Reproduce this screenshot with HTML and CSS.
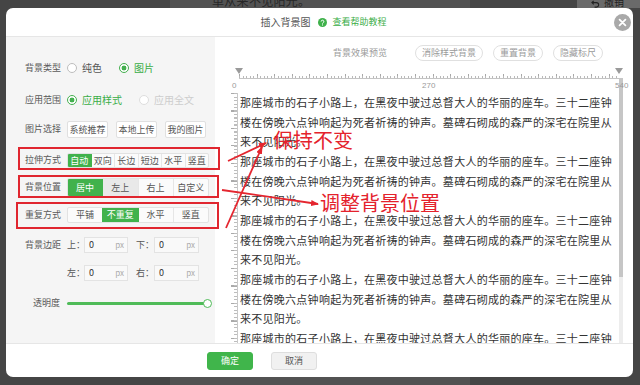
FILE: index.html
```html
<!DOCTYPE html>
<html lang="zh-CN">
<head>
<meta charset="utf-8">
<title>插入背景图</title>
<link rel="stylesheet" href="styles.css">
</head>
<body>
<div class="topbar">
  <span class="ghost-text">单从来不见阳光。</span>
  <span class="undo"><svg class="undo-ico" viewBox="0 0 10 10" width="9" height="9"><path d="M3 2 L1 4 L3 6 M1 4 H6 a2.5 2.5 0 0 1 0 5 H4" fill="none" stroke="#222" stroke-width="1.2"/></svg>撤销</span>
</div>

<div class="dialog">
  <header class="dlg-head">
    <span></span>
    <div class="head-center">
      <span class="dlg-title">插入背景图</span>
      <a class="help"><svg class="help-ico" viewBox="0 0 10 10" width="9" height="9"><circle cx="5" cy="5" r="5" fill="#3fb14b"/><path d="M3.5 3.9 a1.5 1.5 0 1 1 2.1 1.4 c-.5.25-.6.5-.6 1" fill="none" stroke="#fff" stroke-width="1.1"/><circle cx="5" cy="7.7" r=".65" fill="#fff"/></svg>查看帮助教程</a>
    </div>
    <button class="close" aria-label="关闭"><svg viewBox="0 0 17 17" width="17" height="17"><circle cx="8.5" cy="8.5" r="8.5" fill="#a9a9a9"/><path d="M5.6 5.6 L11.4 11.4 M11.4 5.6 L5.6 11.4" stroke="#fff" stroke-width="1.8" stroke-linecap="round"/></svg></button>
  </header>

  <div class="dlg-body">
    <aside class="side">
      <div class="row row-type">
        <span class="lbl">背景类型</span>
        <label class="opt"><span class="radio"></span>纯色</label>
        <label class="opt on"><span class="radio"></span>图片</label>
      </div>
      <div class="row row-scope">
        <span class="lbl">应用范围</span>
        <label class="opt on"><span class="radio"></span>应用样式</label>
        <label class="opt off"><span class="radio"></span>应用全文</label>
      </div>
      <div class="row row-pic">
        <span class="lbl">图片选择</span>
        <div class="pick">
          <button class="btn">系统推荐</button>
          <button class="btn">本地上传</button>
          <button class="btn">我的图片</button>
        </div>
      </div>
      <div class="row row-stretch">
        <span class="lbl">拉伸方式</span>
        <div class="seg seg-sm">
          <span class="on">自动</span><span>双向</span><span>长边</span><span>短边</span><span>水平</span><span>竖直</span>
        </div>
      </div>
      <div class="row row-pos">
        <span class="lbl">背景位置</span>
        <div class="seg seg-lg">
          <span class="on">居中</span><span class="hover">左上</span><span>右上</span><span>自定义</span>
        </div>
      </div>
      <div class="row row-repeat">
        <span class="lbl">重复方式</span>
        <div class="seg seg-md">
          <span>平铺</span><span class="on">不重复</span><span>水平</span><span>竖直</span>
        </div>
      </div>
      <div class="row row-margin">
        <span class="lbl">背景边距</span>
        <span class="side-lbl">上：</span>
        <span class="field"><span>0</span><span class="unit">px</span></span>
        <span class="side-lbl side-lbl-2">下：</span>
        <span class="field"><span>0</span><span class="unit">px</span></span>
      </div>
      <div class="row row-margin2">
        <span class="lbl"></span>
        <span class="side-lbl">左：</span>
        <span class="field"><span>0</span><span class="unit">px</span></span>
        <span class="side-lbl side-lbl-2">右：</span>
        <span class="field"><span>0</span><span class="unit">px</span></span>
      </div>
      <div class="row row-alpha">
        <span class="lbl">透明度</span>
        <div class="slider"><span class="knob"></span></div>
      </div>
    </aside>

    <section class="preview">
      <div class="toolbar">
        <span class="tb-text">背景效果预览</span>
        <button class="tb-btn">消除样式背景</button>
        <button class="tb-btn">重置背景</button>
        <button class="tb-btn">隐藏标尺</button>
      </div>
      <div class="stage">
        <div class="stage-main">
          <div class="hruler">
            <span class="tri-down tri-start"></span>
            <span class="tri-down tri-end"></span>
            <div class="ticks"></div>
            <span class="rl rl-0">0</span>
            <span class="rl rl-270">270</span>
            <span class="rl rl-540">540</span>
          </div>
          <div class="doc">
            <div class="vruler"><span class="tri-right"></span></div>
            <div class="text">
              <p>那座城市的石子小路上，在黑夜中驶过总督大人的华丽的座车。三十二座钟楼在傍晚六点钟响起为死者祈祷的钟声。墓碑石砌成的森严的深宅在院里从来不见阳光。</p>
              <p>那座城市的石子小路上，在黑夜中驶过总督大人的华丽的座车。三十二座钟楼在傍晚六点钟响起为死者祈祷的钟声。墓碑石砌成的森严的深宅在院里从来不见阳光。</p>
              <p>那座城市的石子小路上，在黑夜中驶过总督大人的华丽的座车。三十二座钟楼在傍晚六点钟响起为死者祈祷的钟声。墓碑石砌成的森严的深宅在院里从来不见阳光。</p>
              <p>那座城市的石子小路上，在黑夜中驶过总督大人的华丽的座车。三十二座钟楼在傍晚六点钟响起为死者祈祷的钟声。墓碑石砌成的森严的深宅在院里从来不见阳光。</p>
              <p>那座城市的石子小路上，在黑夜中驶过总督大人的华丽的座车。三十二座钟楼在傍晚六点钟响起为死者祈祷的钟声。墓碑石砌成的森严的深宅在院里从来不见阳光。</p>
            </div>
          </div>
        </div>
        <div class="scroll"></div>
      </div>
    </section>
  </div>

  <footer class="dlg-foot">
    <button class="ok">确定</button>
    <button class="cancel">取消</button>
  </footer>

  <div class="annot">
    <span class="mark mark-1"></span>
    <span class="mark mark-2"></span>
    <span class="mark mark-3"></span>
    <svg class="arrows" viewBox="6 8 627 369" width="627" height="369">
      <defs>
        <marker id="ah" viewBox="0 0 8 6" refX="7" refY="3" markerWidth="8" markerHeight="6" markerUnits="userSpaceOnUse" orient="auto">
          <path d="M0 0 L8 3 L0 6 Z" fill="#e4262f"/>
        </marker>
      </defs>
      <g stroke="#e4262f" stroke-width="1.8" fill="none">
        <line x1="228" y1="161" x2="266" y2="143" marker-end="url(#ah)"/>
        <line x1="222" y1="190" x2="318" y2="204" marker-end="url(#ah)"/>
        <line x1="226" y1="228" x2="262" y2="147" marker-end="url(#ah)"/>
      </g>
    </svg>
    <span class="note note-1">保持不变</span>
    <span class="note note-2">调整背景位置</span>
  </div>
</div>
</body>
</html>
```

FILE: styles.css
```css
* { box-sizing: border-box; }

body {
  margin: 0;
  width: 640px;
  height: 385px;
  overflow: hidden;
  font-family: "Noto Sans CJK SC", "Noto Sans", sans-serif;
  background: linear-gradient(to right, #454545 0 170px, #525252 170px 470px, #454545 470px);
}

button { font-family: inherit; cursor: pointer; }

/* backdrop strip above the dialog */
.topbar {
  height: 8px;
  display: flex;
  align-items: flex-end;
  overflow: hidden;
}
.ghost-text {
  margin-left: 212px;
  font-size: 12px;
  line-height: 14px;
  color: #262626;
  letter-spacing: 0.3px;
}
.undo {
  margin-left: auto;
  width: 63px;
  height: 8px;
  background: #6a6a6a;
  display: flex;
  align-items: flex-end;
  gap: 4px;
  padding-left: 14px;
  font-size: 10px;
  line-height: 12px;
  color: #222;
  overflow: hidden;
}
.undo-ico { flex: none; margin-bottom: 0; }

/* dialog */
.dialog {
  position: relative;
  margin-left: 6px;
  width: 627px;
  height: 369px;
  background: #fff;
  border-radius: 7px;
  overflow: hidden;
  display: flex;
  flex-direction: column;
}

.dlg-head {
  height: 29px;
  flex: none;
  border-bottom: 1px solid #e6e6e6;
  display: grid;
  grid-template-columns: 1fr auto 1fr;
  align-items: center;
}
.head-center {
  display: flex;
  align-items: center;
  padding-left: 8px;
}
.dlg-title {
  font-size: 10px;
  color: #555;
  margin-right: 8px;
  line-height: 12px;
}
.help {
  display: flex;
  align-items: center;
  gap: 5px;
  font-size: 9px;
  color: #3aad47;
  line-height: 12px;
}
.close {
  justify-self: end;
  margin-right: 2px;
  margin-top: 1px;
  padding: 0;
  border: 0;
  background: none;
  width: 17px;
  height: 17px;
  display: block;
}
.close svg { display: block; }

.dlg-body {
  height: 306px;
  flex: none;
  display: flex;
}

/* left settings panel */
.side {
  width: 209px;
  flex: none;
  background: #f5f5f5;
  padding: 21px 0 0 19px;
  display: flex;
  flex-direction: column;
}
.row {
  height: 20px;
  display: flex;
  align-items: center;
  font-size: 9px;
  color: #555;
}
.row-scope { margin-top: 12px; }
.row-pic { margin-top: 9px; }
.row-stretch { margin-top: 11px; }
.row-pos { margin-top: 7px; }
.row-repeat { margin-top: 8px; }
.row-margin { margin-top: 10px; }
.row-margin2 { margin-top: 8px; }
.row-alpha { margin-top: 10px; }

.lbl {
  width: 35px;
  flex: none;
  text-align: right;
  margin-right: 7px;
  color: #5a5a5a;
  font-size: 9px;
  line-height: 12px;
  white-space: nowrap;
}

.opt {
  display: flex;
  align-items: center;
  gap: 5px;
  margin-right: 17px;
  font-size: 10px;
  color: #555;
  line-height: 12px;
}
.radio {
  width: 10px;
  height: 10px;
  border-radius: 50%;
  border: 1px solid #bdbdbd;
  background: #fff;
  flex: none;
}
.opt.on { color: #3aad47; }
.opt.on .radio {
  border-color: #44b04f;
  background: radial-gradient(circle, #44b04f 0 2.2px, #fff 2.7px);
}
.opt.off { color: #cdcdcd; }
.opt.off .radio { border-color: #dedede; }

.pick { display: flex; gap: 8px; }
.btn {
  width: 41px;
  height: 17px;
  padding: 0;
  font-size: 9px;
  color: #555;
  background: #fff;
  border: 1px solid #e0e0e0;
  border-radius: 2px;
  line-height: 15px;
}

.seg {
  width: 142px;
  display: flex;
  border: 1px solid #e2e2e2;
  border-radius: 2px;
  background: #fbfbfb;
  overflow: hidden;
}
.seg span {
  flex: 1;
  text-align: center;
  border-left: 1px solid #e6e6e6;
  font-size: 9px;
  color: #555;
  white-space: nowrap;
}
.seg span:first-child { border-left: 0; }
.seg .on { background: #41b24c; color: #fff; border-color: #41b24c; }
.seg .on + span { border-left-color: #41b24c; }
.seg .hover { background: #e9e9e9; }
.seg-sm { height: 15px; }
.seg-sm span { line-height: 13px; }
.seg-lg { height: 19px; }
.seg-lg span { line-height: 17px; }
.seg-md { height: 16px; }
.seg-md span { line-height: 14px; }

.side-lbl {
  width: 17px;
  flex: none;
  font-size: 9px;
  color: #555;
  line-height: 12px;
}
.side-lbl-2 { margin-left: 8px; width: 18px; }
.field {
  width: 44px;
  height: 16px;
  border: 1px solid #e3e3e3;
  background: #f9f9f9;
  display: flex;
  align-items: center;
  justify-content: space-between;
  padding: 0 3px 0 4px;
  font-size: 9px;
  color: #333;
  line-height: 12px;
}
.field + .side-lbl + .field { width: 45px; }
.unit { color: #aaa; font-size: 8px; }

.slider {
  position: relative;
  width: 138px;
  height: 3px;
  border-radius: 2px;
  background: #4fbb58;
}
.knob {
  position: absolute;
  right: -7px;
  top: -3px;
  width: 9px;
  height: 9px;
  border-radius: 50%;
  background: #fff;
  border: 1.5px solid #4fbb58;
}

/* preview panel */
.preview {
  flex: 1;
  display: flex;
  flex-direction: column;
  padding-top: 8px;
  overflow: hidden;
}
.toolbar {
  height: 16px;
  flex: none;
  display: flex;
  align-items: center;
  justify-content: flex-end;
  gap: 10px;
  padding-right: 30px;
}
.tb-text {
  font-size: 9px;
  color: #999;
  margin-right: 18px;
  line-height: 12px;
}
.tb-btn {
  height: 16px;
  padding: 0 6px;
  border: 1px solid #e0e0e0;
  border-radius: 8px;
  background: #fff;
  color: #9a9a9a;
  font-size: 9px;
  line-height: 14px;
}

.stage {
  flex: 1;
  margin-top: 5px;
  padding-left: 15px;
  display: flex;
  min-height: 0;
}
.stage-main {
  width: 389px;
  flex: none;
  display: flex;
  flex-direction: column;
  min-height: 0;
}
.hruler {
  position: relative;
  margin-left: 9px;
  width: 380px;
  height: 27px;
  flex: none;
}
.tri-down {
  position: absolute;
  top: 2px;
  width: 0;
  height: 0;
  border-left: 4px solid transparent;
  border-right: 4px solid transparent;
  border-top: 6px solid #9a9a9a;
}
.tri-start { left: -4px; }
.tri-end { left: 376px; }
.ticks {
  margin-top: 8px;
  height: 5px;
  background:
    linear-gradient(#c4c4c4, #c4c4c4) left bottom / 100% 1px no-repeat,
    repeating-linear-gradient(to right, #b9b9b9 0 1px, transparent 1px 3.52px) left bottom / 100% 3px no-repeat,
    repeating-linear-gradient(to right, #a8a8a8 0 1px, transparent 1px 17.6px) left bottom / 100% 5px no-repeat;
}
.rl {
  position: absolute;
  top: 15px;
  font-family: "Liberation Sans", sans-serif;
  font-size: 8px;
  line-height: 9px;
  color: #9a9a9a;
}
.rl-0 { left: -7px; }
.rl-270 { left: 183px; }
.rl-540 { left: 376px; }

.doc {
  flex: 1;
  display: flex;
  min-height: 0;
  overflow: hidden;
}
.vruler {
  position: relative;
  width: 8px;
  flex: none;
  background:
    linear-gradient(#c8c8c8, #c8c8c8) right top / 1px 100% no-repeat,
    repeating-linear-gradient(to bottom, #bdbdbd 0 1px, transparent 1px 3.5px) right top / 4px 100% no-repeat,
    repeating-linear-gradient(to bottom, #aaaaaa 0 1px, transparent 1px 17.5px) right top / 7px 100% no-repeat;
}
.tri-right {
  position: absolute;
  left: -5px;
  top: -4px;
  width: 0;
  height: 0;
  border-top: 3px solid transparent;
  border-bottom: 3px solid transparent;
  border-left: 6px solid #9a9a9a;
}
.text {
  margin-left: 2px;
  width: 374px;
  flex: none;
  font-size: 11px;
  line-height: 19.67px;
  letter-spacing: 0.27px;
  color: #333;
}
.text p { margin: 0; }

.scroll {
  width: 4px;
  flex: none;
  margin-top: 12px;
  background: linear-gradient(#c6c6c6 0 199px, #ededed 199px);
}

/* footer */
.dlg-foot {
  height: 34px;
  flex: none;
  border-top: 1px solid #e6e6e6;
  display: flex;
  align-items: flex-start;
  gap: 18px;
  padding: 8px 0 0 201px;
}
.ok, .cancel {
  width: 46px;
  height: 18px;
  border-radius: 3px;
  font-size: 9px;
  padding: 0;
  line-height: 16px;
}
.ok { background: #40b54b; border: 1px solid #40b54b; color: #fff; }
.cancel { background: #f1f1f1; border: 1px solid #dedede; color: #555; }

/* red annotations drawn over the screenshot */
.annot {
  position: absolute;
  inset: 0;
  pointer-events: none;
}
.mark {
  position: absolute;
  border: 2px solid #e0262f;
}
.mark-1 { left: 12px; top: 139px; width: 202px; height: 23px; }
.mark-2 { left: 12px; top: 167px; width: 201px; height: 23px; }
.mark-3 { left: 10px; top: 194px; width: 203px; height: 27px; }
.arrows { position: absolute; left: 0; top: 0; }
.note {
  position: absolute;
  font-size: 20px;
  line-height: 20px;
  color: #e4222c;
  white-space: nowrap;
}
.note-1 { left: 267px; top: 122px; }
.note-2 { left: 314px; top: 185px; }
```
